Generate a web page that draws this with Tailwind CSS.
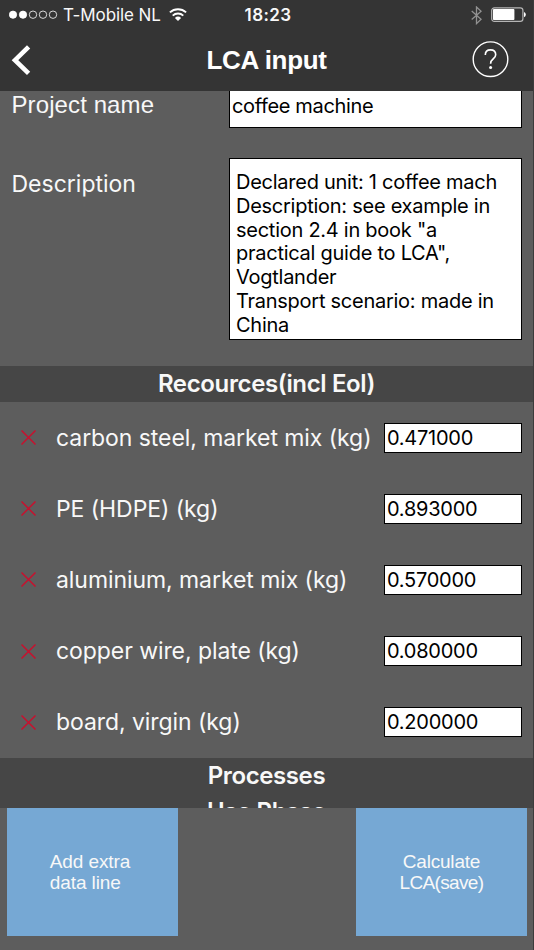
<!DOCTYPE html>
<html lang="en">
<head>
    <meta charset="UTF-8">
    <meta name="viewport" content="width=device-width, initial-scale=1.0">
    <title>LCA input</title>
    <script src="https://cdn.jsdelivr.net/npm/@tailwindcss/browser@4"></script>
</head>
<body class="bg-[#5d5d5d] font-['Inter',sans-serif] text-[#f8f8f8]">
    <div class="w-[534px] h-[950px] flex flex-col overflow-hidden border-r border-[#3c3c3c]">
        <!-- Status bar and navigation -->
        <header class="h-[91px] shrink-0 bg-[#343434]">
            <div class="h-[30px] grid grid-cols-[1fr_auto_1fr] items-center pl-[9px] pr-[6px]">
                <div class="flex items-center">
                    <svg class="w-[49px] h-[10px] shrink-0" viewBox="0 0 49 10" fill="none" stroke="#e8e8e8" stroke-width="0.9">
                        <circle cx="4" cy="4.7" r="3.6" fill="#fff" stroke="#fff"/>
                        <circle cx="14" cy="4.7" r="3.6" fill="#fff" stroke="#fff"/>
                        <circle cx="24" cy="4.7" r="3.7"/>
                        <circle cx="34" cy="4.7" r="3.7"/>
                        <circle cx="44" cy="4.7" r="3.7"/>
                    </svg>
                    <span class="ml-[5px] text-[17px] leading-[30px] tracking-[-0.1px] whitespace-nowrap">T-Mobile NL</span>
                    <svg class="ml-[8px] w-[18px] h-[14px] shrink-0" viewBox="0 0 18 14" fill="none" stroke="#fff" stroke-width="1.9">
                        <path d="M0.9 4.4a12 12 0 0 1 16.2 0"/>
                        <path d="M3.7 7.6a7.8 7.8 0 0 1 10.6 0"/>
                        <path d="M5.9 10a4.6 4.6 0 0 1 6.2 0L9 13z" fill="#fff" stroke="none"/>
                    </svg>
                </div>
                <span class="text-center text-[17px] leading-[30px] tracking-[0.4px] font-semibold">18:23</span>
                <div class="flex items-center justify-end">
                    <svg class="w-[11px] h-[19px]" viewBox="0 0 11 19" fill="none" stroke="#929292" stroke-width="1.3">
                        <path d="M0.7 4.9l9.4 8.3L5.5 17.6V1l4.6 4.2L0.7 13.5"/>
                    </svg>
                    <svg class="ml-[9px] w-[36px] h-[16px]" viewBox="0 0 36 16">
                        <rect x="0.7" y="0.8" width="31.2" height="13.6" rx="2.6" fill="none" stroke="#b5b5b5" stroke-width="1.2"/>
                        <rect x="2" y="2.1" width="21.4" height="11" rx="0.8" fill="#fff"/>
                        <path d="M33 5q1.8 0.6 1.8 2.6t-1.8 2.6z" fill="#fff"/>
                    </svg>
                </div>
            </div>
            <div class="h-[59px] grid grid-cols-[1fr_auto_1fr] items-center px-[11px]">
                <svg class="w-[20px] h-[30px]" viewBox="0 0 20 30" fill="none" stroke="#fff" stroke-width="4.6">
                    <path d="M17.6 1.9L4 15.2l13.6 13.1"/>
                </svg>
                <h1 class="text-center text-[26px] leading-[30px] tracking-[-0.35px] font-bold whitespace-nowrap font-['Liberation_Sans',sans-serif] text-white">LCA input</h1>
                <svg class="justify-self-end mr-[13px] w-[37px] h-[37px]" viewBox="0 0 37 37" fill="none" stroke="#fff" stroke-width="1.4">
                    <circle cx="18.5" cy="18.2" r="17.3"/>
                    <path d="M13.3 14q0-5.1 5.2-5.1t5.2 4.9q0 2.3-2.6 4.2t-2.5 4.8" stroke-width="1.6"/>
                    <circle cx="18.6" cy="26.4" r="1.5" fill="#fff" stroke="none"/>
                </svg>
            </div>
        </header>

        <!-- Scrolled form -->
        <main class="h-[717px] shrink-0 overflow-hidden">
            <div class="h-[37px] flex items-start justify-between pl-[11.5px] pr-[11px]">
                <label class="text-[24px] leading-[28px] tracking-[0.1px] whitespace-nowrap font-['Liberation_Sans',sans-serif]">Project name</label>
                <input type="text" value="coffee machine" class="w-[293px] h-[37px] pl-[2px] pb-[6px] bg-white border border-t-0 border-black text-[20px] tracking-[-0.35px] text-black">
            </div>
            <div class="mt-[30px] flex items-start justify-between pl-[11.5px] pr-[11px]">
                <label class="mt-[11px] text-[23px] leading-[30px] whitespace-nowrap">Description</label>
                <textarea class="w-[293px] h-[182px] resize-none overflow-hidden pl-[6px] pr-0 pt-[12px] bg-white border border-black text-[20px] leading-[23.8px] tracking-[-0.26px] whitespace-pre text-black">Declared unit: 1 coffee mach
Description: see example in
section 2.4 in book "a
practical guide to LCA",
Vogtlander
Transport scenario: made in
China</textarea>
            </div>

            <h2 class="mt-[26px] h-[36px] bg-[#464646] text-center text-[24px] leading-[36px] tracking-[-0.36px] font-semibold">Recources(incl Eol)</h2>
            <div id="resources"></div>

            <div class="h-[50px] bg-[#464646] text-center text-[24px] tracking-[-0.4px] font-semibold">
                <h2 class="leading-[36px]">Processes</h2>
                <h2 class="leading-[36px]">Use Phase</h2>
            </div>
        </main>

        <!-- Actions -->
        <footer class="flex justify-between items-start pl-[7px] pr-[6px] font-['Liberation_Sans',sans-serif] text-[19px] leading-[21.5px]">
            <button class="w-[171px] h-[128px] bg-[#76a8d4] flex items-center justify-center text-left tracking-[-0.1px]"><span class="-ml-[5px]">Add extra<br>data line</span></button>
            <button class="w-[171px] h-[128px] bg-[#76a8d4] flex items-center justify-center text-center tracking-[-0.2px]"><span>Calculate<br><span class="tracking-[-0.65px]">LCA(save)</span></span></button>
        </footer>
    </div>

    <script>
    const resources = [
        ['carbon steel, market mix (kg)', '0.471000'],
        ['PE (HDPE) (kg)', '0.893000'],
        ['aluminium, market mix (kg)', '0.570000'],
        ['copper wire, plate (kg)', '0.080000'],
        ['board, virgin (kg)', '0.200000'],
    ];

    document.getElementById('resources').innerHTML = resources.map(([name, amount]) => `
        <div class="h-[71.2px] flex items-center pl-[21px] pr-[11px]">
            <svg class="w-[15px] h-[15px] shrink-0" viewBox="0 0 15 15" stroke="#c8102e" stroke-width="1.5"><path d="M0.5 0.5l14 14M14.5 0.5l-14 14"/></svg>
            <span class="ml-5 text-[23px] leading-[30px] tracking-[-0.07px] whitespace-nowrap">${name}</span>
            <input type="text" value="${amount}" class="ml-auto w-[138px] h-[30px] shrink-0 pl-[2px] bg-white border border-black text-[20px] tracking-[-0.25px] text-black">
        </div>`).join('');
    </script>
</body>
</html>
